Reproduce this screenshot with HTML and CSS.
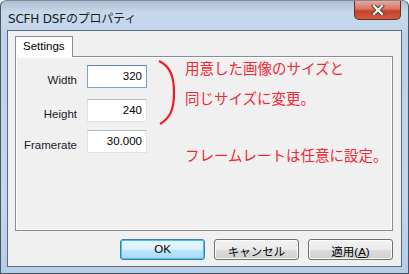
FILE: index.html
```html
<!DOCTYPE html>
<html>
<head>
<meta charset="utf-8">
<link rel="stylesheet" href="styles.css">
</head>
<body>
<div class="window">
  <div class="titlebar">
    <span class="title">SCFH DSFのプロパティ</span>
    <div class="close"><svg width="14" height="10" viewBox="0 0 14 10"><path d="M3 1 L11 9 M11 1 L3 9" stroke="#3a3a3a" stroke-width="4" stroke-linecap="square"/><path d="M3 1 L11 9 M11 1 L3 9" stroke="#fff" stroke-width="2.2" stroke-linecap="square"/></svg></div>
  </div>
  <div class="client">
    <div class="tabs"><div class="tab">Settings</div></div>
    <div class="panel">
      <div class="form">
        <div class="row r1"><label>Width</label><div class="field focus">320</div></div>
        <div class="row r2"><label>Height</label><div class="field">240</div></div>
        <div class="row r3"><label>Framerate</label><div class="field">30.000</div></div>
      </div>
      <svg class="bracket" width="20" height="66" viewBox="0 0 20 66"><path d="M1 1 C12 6 16 16 16 33 C16 50 12 58 2 64" fill="none" stroke="#ee1c24" stroke-width="2.2"/></svg>
      <div class="notes">
        <div class="n1">用意した画像のサイズと</div>
        <div class="n2">同じサイズに変更。</div>
        <div class="n3">フレームレートは任意に設定。</div>
      </div>
    </div>
    <div class="buttons">
      <div class="btn default">OK</div>
      <div class="btn">キャンセル</div>
      <div class="btn">適用(<u>A</u>)</div>
    </div>
  </div>
</div>
</body>
</html>
```
FILE: styles.css
```css
html, body { margin: 0; padding: 0; }
body { width: 409px; height: 274px; overflow: hidden; font-family: "Liberation Sans", "Noto Sans CJK JP", sans-serif; }
.window {
  box-sizing: border-box;
  width: 409px; height: 274px;
  background: linear-gradient(180deg, #aebfd3 0px, #c8d9ec 12px, #bcd2ea 40px, #c2d7ee 200px, #b4cde8 274px);
  border: 1px solid #4a5566;
  border-top-color: #7c8a9c;
  border-radius: 6px 6px 0 0;
  display: flex; flex-direction: column;
  padding: 0 6px 6px 6px;
}
.titlebar { height: 29px; display: flex; align-items: flex-start; justify-content: space-between; }
.title { font-family: "DejaVu Sans", "Noto Sans CJK JP", sans-serif; font-size: 12px; color: #1b1b1b; margin-top: 8px; margin-left: 1px; letter-spacing: -0.2px; }
.close {
  width: 45px; height: 18px; margin-right: 1px;
  border: 1px solid #6b2a23; border-top: none;
  border-radius: 0 0 5px 5px;
  background: linear-gradient(180deg, #e9a99a 0%, #d8735f 45%, #c4422a 55%, #d05a3f 100%);
  display: flex; align-items: center; justify-content: center;
}
.client {
  flex: 1;
  background: #f0f0f0;
  border: 1px solid #5d6a7b;
  display: flex; flex-direction: column;
  padding: 5px 8px 6px 7px;
  font-family: "Liberation Sans", "Noto Sans CJK JP", sans-serif;
  font-size: 11.5px;
}
.tabs { display: flex; height: 20px; }
.tab {
  box-sizing: border-box;
  width: 58px; height: 21px;
  border: 1px solid #898c95; border-bottom: none;
  background: #fff;
  padding: 3px 0 0 7px;
  position: relative; z-index: 1;
  color: #000;
}
.panel {
  height: 175px;
  box-sizing: border-box;
  border: 1px solid #898c95;
  box-shadow: inset 1px 1px 0 #fff, inset -1px -1px 0 #fff;
  background: #f0f0f0;
  display: flex; align-items: flex-start;
}
.form { width: 132px; padding-top: 8px; }
.row { display: flex; align-items: center; height: 23px; }
.r2 { margin-top: 11px; }
.r3 { margin-top: 8px; }
.row label { width: 61px; text-align: right; color: #1a1a2a; padding-top: 6px; }
.field {
  box-sizing: border-box;
  margin-left: 10px;
  width: 60px; height: 23px;
  background: #fff;
  border: 1px solid #dfe2e6;
  border-top-color: #b8bcc2;
  text-align: right;
  padding: 4px 4px 0 0;
  color: #000;
}
.field.focus { border-color: #7ea3c8; border-top-color: #5b86b8; }
.bracket { margin-left: 10px; margin-top: 3px; }
.notes { margin-left: 7px; margin-top: 2px; font-family: "Noto Sans CJK JP", sans-serif; font-size: 14.5px; color: #ee2a33; line-height: 18px; }
.n2 { margin-top: 12px; }
.n3 { margin-top: 39px; }
.buttons { display: flex; justify-content: flex-end; gap: 9px; margin-top: 8px; }
.btn {
  box-sizing: border-box;
  width: 85px; height: 21px;
  border: 1px solid #707070; border-radius: 3px;
  background: linear-gradient(180deg, #f2f2f2 0%, #ebebeb 50%, #dddddd 51%, #cfcfcf 100%);
  text-align: center; padding-top: 3px;
  font-family: "Liberation Sans", "Noto Sans CJK JP", sans-serif;
  font-size: 11.5px; color: #000;
  box-shadow: inset 0 0 0 1px #fbfbfb;
}
.btn.default {
  border-color: #3c7fb1;
  background: linear-gradient(180deg, #eaf6fd 0%, #d9f0fc 50%, #bee6fd 51%, #a7d9f5 100%);
  box-shadow: inset 0 0 0 1px #48c0ec;
}
.btn u { text-decoration: underline; }
```
